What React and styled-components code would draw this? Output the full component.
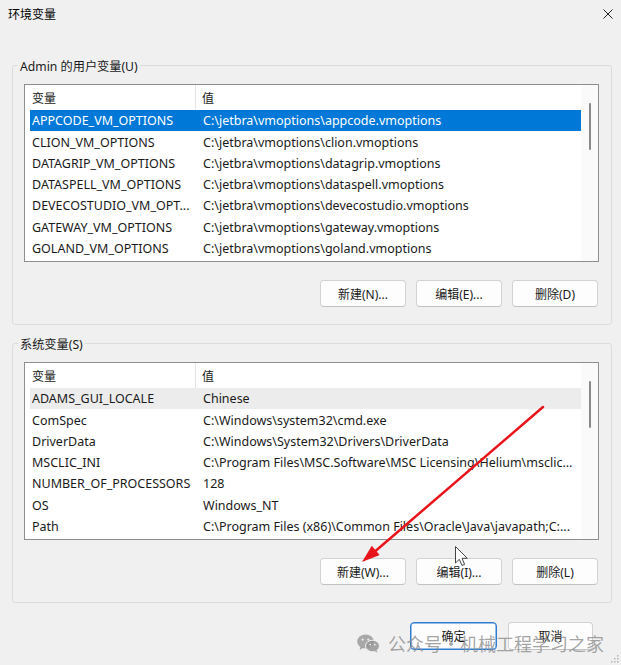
import React from 'react';
import styled, { createGlobalStyle } from 'styled-components';

const Global = createGlobalStyle`
  html, body { margin: 0; padding: 0; background: #f0f0f0; }
  body { font-family: "Noto Sans", "Noto Sans CJK SC", sans-serif; }
`;

const FONT = `"Noto Sans", "Noto Sans CJK SC", sans-serif`;

const Window = styled.div`
  position: relative;
  width: 621px;
  height: 665px;
  overflow: hidden;
  background: #f0f0f0;
  font-family: ${FONT};
  font-size: 12px;
  color: #1a1a1a;
`;

const TitleBar = styled.div`
  height: 28px;
  display: flex;
  align-items: center;
  justify-content: space-between;
  padding: 0 8px;
`;

const Title = styled.span`
  font-size: 12px;
  color: #000;
`;

const Content = styled.div`
  padding: 0 9px 0 12px;
`;

const Group = styled.fieldset`
  margin: ${p => p.$top}px 0 0 0;
  border: 1px solid #dcdcdc;
  border-radius: 3px;
  padding: 11px 12px 17px 11px;
  min-width: 0;
`;

const Legend = styled.legend`
  padding: 0 2px;
  margin-left: -6px;
  height: 16px;
  line-height: 19px;
  font-size: 12.2px;
  color: #1a1a1a;
`;

const List = styled.div`
  height: 178px;
  box-sizing: border-box;
  border: 1px solid #8e8e8e;
  background: #fff;
  display: flex;
  font-size: 12.5px;
`;

const ListBody = styled.div`
  flex: 1;
  min-width: 0;
  padding-left: 5px;
  display: flex;
  flex-direction: column;
  overflow: hidden;
`;

const HeaderRow = styled.div`
  height: 25px;
  flex: none;
  display: grid;
  grid-template-columns: 166px 1fr;
  align-items: stretch;
`;

const HeaderCell = styled.div`
  display: flex;
  align-items: center;
  padding-left: ${p => (p.$first ? 2 : 6)}px;
  border-right: ${p => (p.$first ? '1px solid #e5e5e5' : 'none')};
  font-size: 12px;
  color: #1a1a1a;
`;

const Row = styled.div`
  height: 21.333px;
  flex: none;
  display: grid;
  grid-template-columns: 166px 1fr;
  align-items: center;
  line-height: 23px;
  background: ${p => (p.$sel === 'active' ? '#0078d7' : p.$sel === 'inactive' ? '#ececec' : 'transparent')};
  color: ${p => (p.$sel === 'active' ? '#fff' : '#1a1a1a')};
`;

const Cell = styled.div`
  padding-left: ${p => (p.$first ? 2 : 7)}px;
  white-space: nowrap;
  overflow: hidden;
`;

const Scrollbar = styled.div`
  width: 17px;
  flex: none;
  background: #fafafa;
  display: flex;
  flex-direction: column;
  align-items: center;
  padding-top: 18px;
  box-sizing: border-box;
`;

const Thumb = styled.div`
  width: 2px;
  height: 47px;
  border-radius: 1px;
  background: #8a8a8a;
`;

const ButtonRow = styled.div`
  display: flex;
  justify-content: flex-end;
  gap: 10px;
  margin-top: 18px;
  padding-right: 1px;
`;

const Button = styled.button`
  width: ${p => p.$w || 86}px;
  height: ${p => p.$h || 27}px;
  box-sizing: border-box;
  background: #fdfdfd;
  border: 1px solid ${p => (p.$primary ? '#2f7dd0' : '#d2d2d2')};
  border-bottom-color: ${p => (p.$primary ? '#2f7dd0' : '#c2c2c2')};
  box-shadow: ${p => (p.$primary ? 'inset 0 0 0 0.5px #2f7dd0' : 'none')};
  border-radius: 4px;
  font-family: ${FONT};
  font-size: 12px;
  color: #1a1a1a;
  padding: 0;
  display: flex;
  align-items: center;
  justify-content: center;
`;

const Footer = styled.div`
  display: flex;
  justify-content: flex-end;
  gap: 11px;
  margin-top: 19px;
  padding-right: 19px;
`;

const Overlay = styled.svg`
  position: absolute;
  left: 0;
  top: 0;
  pointer-events: none;
`;

const Watermark = styled.div`
  position: absolute;
  left: 357px;
  top: 632px;
  display: flex;
  align-items: center;
  gap: 8px;
  font-family: "Noto Sans CJK SC", sans-serif;
  font-size: 18px;
  line-height: 22px;
  color: rgba(140, 140, 140, 0.78);
  pointer-events: none;
  white-space: nowrap;
`;

const WatermarkDot = styled.span`
  margin: 0 -8px;
`;

const userVars = [
  ['APPCODE_VM_OPTIONS', 'C:\\jetbra\\vmoptions\\appcode.vmoptions'],
  ['CLION_VM_OPTIONS', 'C:\\jetbra\\vmoptions\\clion.vmoptions'],
  ['DATAGRIP_VM_OPTIONS', 'C:\\jetbra\\vmoptions\\datagrip.vmoptions'],
  ['DATASPELL_VM_OPTIONS', 'C:\\jetbra\\vmoptions\\dataspell.vmoptions'],
  ['DEVECOSTUDIO_VM_OPT...', 'C:\\jetbra\\vmoptions\\devecostudio.vmoptions'],
  ['GATEWAY_VM_OPTIONS', 'C:\\jetbra\\vmoptions\\gateway.vmoptions'],
  ['GOLAND_VM_OPTIONS', 'C:\\jetbra\\vmoptions\\goland.vmoptions'],
];

const sysVars = [
  ['ADAMS_GUI_LOCALE', 'Chinese'],
  ['ComSpec', 'C:\\Windows\\system32\\cmd.exe'],
  ['DriverData', 'C:\\Windows\\System32\\Drivers\\DriverData'],
  ['MSCLIC_INI', 'C:\\Program Files\\MSC.Software\\MSC Licensing\\Helium\\msclic...'],
  ['NUMBER_OF_PROCESSORS', '128'],
  ['OS', 'Windows_NT'],
  ['Path', 'C:\\Program Files (x86)\\Common Files\\Oracle\\Java\\javapath;C:...'],
];

function VarList({ rows, selected, selMode }) {
  return (
    <List>
      <ListBody>
        <HeaderRow>
          <HeaderCell $first>变量</HeaderCell>
          <HeaderCell>值</HeaderCell>
        </HeaderRow>
        {rows.map(([k, v], i) => (
          <Row key={k} $sel={i === selected ? selMode : undefined}>
            <Cell $first>{k}</Cell>
            <Cell>{v}</Cell>
          </Row>
        ))}
      </ListBody>
      <Scrollbar>
        <Thumb />
      </Scrollbar>
    </List>
  );
}

function WeChatIcon() {
  return (
    <svg width="23" height="19" viewBox="0 0 23 19">
      <ellipse cx="8.5" cy="7.5" rx="8.3" ry="7" fill="rgba(150,150,150,0.8)" />
      <path d="M3.5 12.5 L2.6 16 L6.5 13.8 Z" fill="rgba(150,150,150,0.8)" />
      <circle cx="5.6" cy="5.6" r="1.1" fill="#f0f0f0" />
      <circle cx="11.3" cy="5.6" r="1.1" fill="#f0f0f0" />
      <ellipse cx="15.5" cy="12" rx="7" ry="5.8" fill="rgba(150,150,150,0.85)" stroke="#f0f0f0" strokeWidth="1" />
      <path d="M19.5 16 L20.5 18.6 L17.3 17 Z" fill="rgba(150,150,150,0.85)" />
      <circle cx="13.2" cy="10.6" r="0.9" fill="#f0f0f0" />
      <circle cx="17.8" cy="10.6" r="0.9" fill="#f0f0f0" />
    </svg>
  );
}

export default function App() {
  return (
    <Window>
      <Global />
      <TitleBar>
        <Title>环境变量</Title>
        <svg width="10" height="10" viewBox="0 0 10 10">
          <path d="M0.5 0.5 L9.5 9.5 M9.5 0.5 L0.5 9.5" stroke="#222" strokeWidth="1" />
        </svg>
      </TitleBar>
      <Content>
        <Group $top={29}>
          <Legend>Admin 的用户变量(U)</Legend>
          <VarList rows={userVars} selected={0} selMode="active" />
          <ButtonRow>
            <Button>新建(N)...</Button>
            <Button>编辑(E)...</Button>
            <Button>删除(D)</Button>
          </ButtonRow>
        </Group>
        <Group $top={10}>
          <Legend>系统变量(S)</Legend>
          <VarList rows={sysVars} selected={0} selMode="inactive" />
          <ButtonRow>
            <Button>新建(W)...</Button>
            <Button>编辑(I)...</Button>
            <Button>删除(L)</Button>
          </ButtonRow>
        </Group>
        <Footer>
          <Button $primary $w={87} $h={28}>确定</Button>
          <Button $w={85} $h={28}>取消</Button>
        </Footer>
      </Content>

      <Overlay width="621" height="665" viewBox="0 0 621 665">
        <line x1="543" y1="407" x2="372" y2="554" stroke="#e8141b" strokeWidth="2.5" strokeLinecap="round" />
        <polygon points="362,562 379.6,554.9 371.8,545.7" fill="#e8141b" />
        <path
          d="M455.5 546.5 L455.5 563 L459.3 559.3 L462 565.5 L464.6 564.4 L462 558.3 L467.3 558.3 Z"
          fill="#fff"
          stroke="#444"
          strokeWidth="1"
          strokeLinejoin="round"
        />
        <g fill="#b5b5b5">
          <rect x="617" y="655" width="1.5" height="1.5" />
          <rect x="614" y="658" width="1.5" height="1.5" />
          <rect x="617" y="658" width="1.5" height="1.5" />
          <rect x="611" y="661" width="1.5" height="1.5" />
          <rect x="614" y="661" width="1.5" height="1.5" />
          <rect x="617" y="661" width="1.5" height="1.5" />
        </g>
      </Overlay>

      <Watermark>
        <WeChatIcon />
        <span>公众号</span>
        <WatermarkDot>·</WatermarkDot>
        <span>机械工程学习之家</span>
      </Watermark>
    </Window>
  );
}
